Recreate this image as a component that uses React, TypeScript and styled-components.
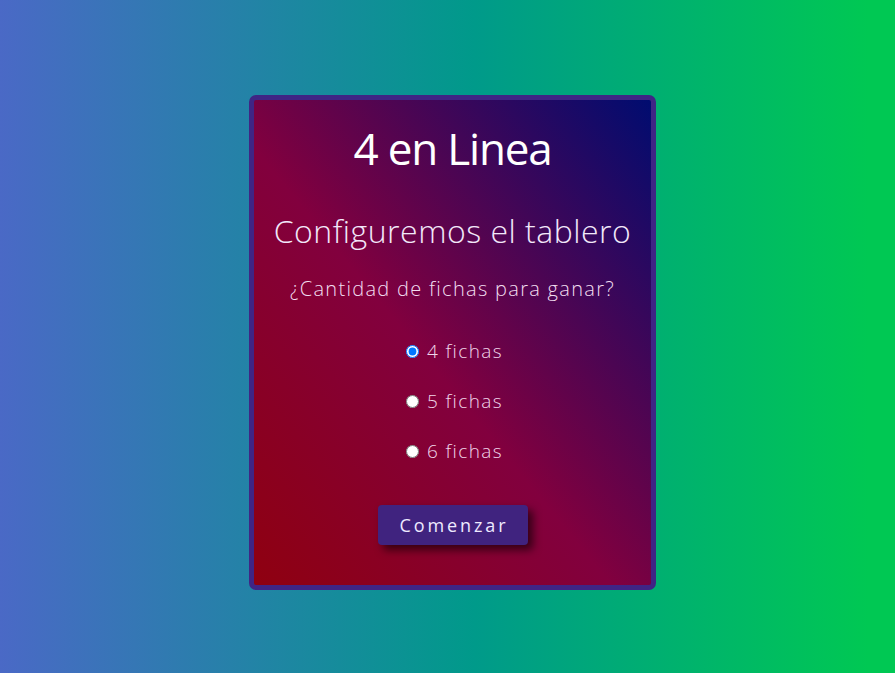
import React, { useState } from "react";
import styled, { createGlobalStyle } from "styled-components";

const GlobalStyle = createGlobalStyle`
  html, body {
    margin: 0;
    padding: 0;
  }
  body {
    font-family: "Open Sans", "Liberation Sans", sans-serif;
  }
`;

const Page = styled.main`
  box-sizing: border-box;
  height: 673px;
  padding: 12px 0 0 10px;
  display: flex;
  align-items: center;
  justify-content: center;
  background: linear-gradient(to right, #4a69c6 0%, #009a8a 53%, #00c853 97%, #00c853 100%);
`;

const Card = styled.section`
  width: 397px;
  height: 485px;
  border: 5px solid #3f2585;
  border-radius: 7px;
  background: linear-gradient(to top right, #8f0010 0%, #82003e 45%, #000c70 100%);
  display: flex;
  flex-direction: column;
  align-items: center;
`;

const Title = styled.h1`
  margin: 26px 0 0;
  font-size: 44px;
  line-height: 44px;
  font-weight: 400;
  letter-spacing: -1.2px;
  color: #ffffff;
`;

const Subtitle = styled.h2`
  margin: 44.6px 0 0;
  font-size: 32px;
  line-height: 32px;
  font-weight: 300;
  letter-spacing: 0.5px;
  color: #f2e8fa;
`;

const Question = styled.p`
  margin: 32.5px 0 0;
  font-size: 20px;
  line-height: 20px;
  font-weight: 300;
  letter-spacing: 1.3px;
  color: #f2ddf0;
`;

const Options = styled.div`
  margin-top: 43px;
  padding-left: 4px;
  display: flex;
  flex-direction: column;
  align-items: center;
  gap: 32px;
`;

const Option = styled.label`
  display: flex;
  align-items: center;
  height: 18px;
  font-size: 19px;
  line-height: 18px;
  font-weight: 300;
  letter-spacing: 1.4px;
  color: #f0d6ea;
  cursor: pointer;
`;

const Radio = styled.input`
  width: 13px;
  height: 13px;
  margin: 0 8px 0 0;
`;

const StartButton = styled.button`
  margin-top: 45px;
  width: 150px;
  height: 40px;
  padding: 0 0 0 3px;
  border: none;
  border-radius: 4px;
  background: #40237f;
  color: #eeeaff;
  font-family: "Open Sans", "Liberation Sans", sans-serif;
  font-size: 18px;
  font-weight: 400;
  letter-spacing: 2.9px;
  box-shadow: 5px 5px 8px rgba(0, 0, 0, 0.6);
  cursor: pointer;
`;

const options = [4, 5, 6];

export default function App() {
  const [value, setValue] = useState(4);
  return (
    <>
      <GlobalStyle />
      <Page>
        <Card>
          <Title>4 en Linea</Title>
          <Subtitle>Configuremos el tablero</Subtitle>
          <Question>¿Cantidad de fichas para ganar?</Question>
          <Options>
            {options.map((n) => (
              <Option key={n}>
                <Radio
                  type="radio"
                  name="fichas"
                  checked={value === n}
                  onChange={() => setValue(n)}
                />
                {n} fichas
              </Option>
            ))}
          </Options>
          <StartButton>Comenzar</StartButton>
        </Card>
      </Page>
    </>
  );
}
